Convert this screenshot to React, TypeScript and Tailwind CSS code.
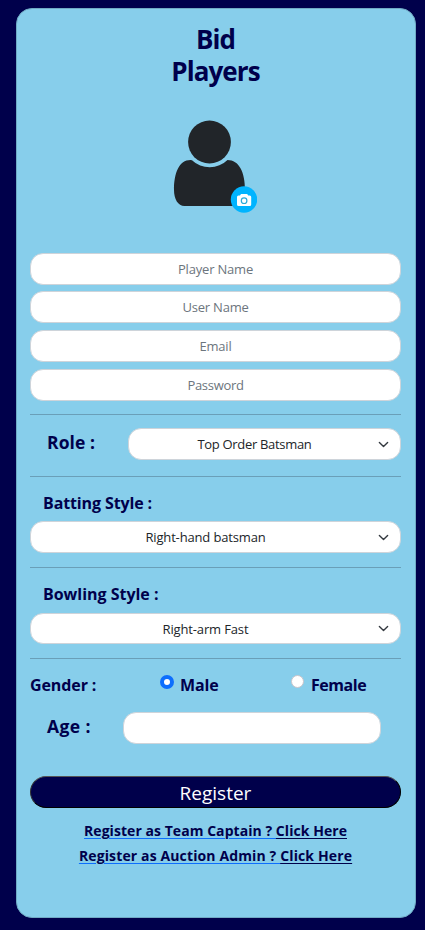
import React from "react";

const field =
  "block h-8 w-full rounded-[13px] border border-[#ced4da] bg-white text-center text-[13px] text-[#212529] placeholder:text-[#6c757d] outline-none";

function Chevron({ className }: { className: string }) {
  return (
    <svg className={"pointer-events-none absolute right-[11px] " + className} width="11" height="11" viewBox="0 0 16 16" fill="none" stroke="#343a40" strokeWidth="2" strokeLinecap="round" strokeLinejoin="round">
      <path d="m2 5 6 6 6-6" />
    </svg>
  );
}

function Select({ text, className, textClass, chevronClass = "top-[10px]" }: { text: string; className: string; textClass: string; chevronClass?: string }) {
  return (
    <div className={"relative flex items-center justify-center rounded-[13px] border border-[#ced4da] bg-white text-[13px] text-[#212529] " + className}>
      <span className={"whitespace-nowrap " + textClass}>{text}</span>
      <Chevron className={chevronClass} />
    </div>
  );
}

function Rule({ className = "" }: { className?: string }) {
  return <div className={"h-px bg-[#6a9fb8] " + className} />;
}

function Avatar() {
  return (
    <div className="ml-[143px] mt-[33px] h-[93px] w-[84px]">
      <svg width="84" height="93" viewBox="173 120 84 93">
        <circle cx="209.5" cy="142" r="21.4" fill="#212529" />
        <path d="M190.5 160C179 160 174 173 174 190C174 199 178 206 184.500 206H236C242 206 245 199 245 190C245 172 239 160 227.500 160A25.500 25.500 0 0 1 192 160.200Z" fill="#212529" />
        <circle cx="244" cy="199.500" r="13.200" fill="#00b4ff" />
        <path d="M238.500 195.500H240L241 194H247.200L248.200 195.500H249.700Q251.200 195.500 251.200 197V204.500Q251.200 206 249.700 206H238.500Q237 206 237 204.500V197Q237 195.500 238.500 195.500Z" fill="white" />
        <circle cx="244.100" cy="200.700" r="2.800" fill="none" stroke="#2aa9d8" strokeWidth="1.2" />
      </svg>
    </div>
  );
}

export default function App() {
  return (
    <main className="h-[930px] w-[425px] bg-[#00004b] pl-4 pt-2 font-['Open_Sans','Noto_Sans',sans-serif] text-[#00004b]">
      <section className="h-[910px] w-[400px] rounded-[16px] border border-[#70aac4] bg-[#87ceeb] pl-[13px] pr-[14px] pt-[14px]">
        <h1 className="text-center text-[26px] font-bold leading-8 tracking-[-0.9px]">
          <span className="block">Bid</span>
          <span className="block">Players</span>
        </h1>
        <Avatar />
        <form className="mt-10" onSubmit={(e) => e.preventDefault()}>
          <input className={field + " tracking-[-0.2px]"} placeholder="Player Name" />
          <input className={field + " mt-[6px] tracking-[-0.2px]"} placeholder="User Name" />
          <input className={field + " mt-[7px] tracking-[-0.2px]"} placeholder="Email" />
          <input className={field + " mt-[7px] tracking-[-0.3px]"} placeholder="Password" />
          <Rule className="mt-[13px]" />
          <div className="mt-[13px] flex h-8">
            <label className="w-[98px] whitespace-nowrap pl-[17px] text-[17.5px] font-bold leading-[28px] tracking-[0.1px]">Role :</label>
            <Select text="Top Order Batsman" className="h-8 w-[273px] pr-5 pt-[2px]" textClass="tracking-[-0.32px]" />
          </div>
          <Rule className="mt-4" />
          <label className="mt-[14px] block h-[30px] pl-[13px] text-[16px] font-bold leading-6 tracking-[-0.12px]">Batting Style :</label>
          <Select text="Right-hand batsman" className="h-8 pr-5 pt-[2px]" textClass="tracking-[-0.15px]" />
          <Rule className="mt-[14px]" />
          <label className="mt-[14px] block h-[31px] pl-[13px] text-[16px] font-bold leading-6 tracking-[-0.02px]">Bowling Style :</label>
          <Select text="Right-arm Fast" className="h-[31px] pr-5 pt-[2px]" textClass="tracking-[-0.15px]" chevronClass="top-[9px]" />
          <Rule className="mt-[14px]" />
          <div className="mt-[14px] flex h-6 text-[16px] font-bold leading-6">
            <span className="w-[130px] tracking-[-0.1px]">Gender :</span>
            <label className="flex w-[131px] tracking-[-0.1px]">
              <input type="radio" name="gender" defaultChecked className="mr-[6px] mt-[2px] h-[14px] w-[14px] appearance-none rounded-full border-4 border-[#0d6efd] bg-white" />
              Male
            </label>
            <label className="flex tracking-[-0.45px]">
              <input type="radio" name="gender" className="mr-[7px] mt-[2px] h-[13px] w-[13px] appearance-none rounded-full border border-[#c9c5cb] bg-white" />
              Female
            </label>
          </div>
          <div className="mt-[15px] flex h-8">
            <label className="w-[93px] whitespace-nowrap pl-[17px] text-[17.5px] font-bold leading-[29px] tracking-[0.4px]">Age :</label>
            <input className="h-8 w-[258px] rounded-[13px] border border-[#ced4da] bg-white text-center text-[13px] outline-none" />
          </div>
          <button className="mt-8 block h-8 w-full rounded-full border border-b-black border-l-[#343434] border-r-black border-t-[#555] bg-[#00004b] pt-px text-[19px] leading-[30px] text-white">
            Register
          </button>
        </form>
        <div className="mt-[10px] text-center text-[14px] font-bold leading-[25px]">
          <a className="block whitespace-nowrap tracking-[0.05px] underline decoration-[#0d6efd] decoration-1 underline-offset-2">
            Register as Team Captain ? <span className="underline decoration-[#00004b] decoration-1 underline-offset-2">Click Here</span>
          </a>
          <a className="block whitespace-nowrap tracking-[0.13px] underline decoration-[#0d6efd] decoration-1 underline-offset-2">
            Register as Auction Admin ? <span className="underline decoration-[#00004b] decoration-1 underline-offset-2">Click Here</span>
          </a>
        </div>
      </section>
    </main>
  );
}
